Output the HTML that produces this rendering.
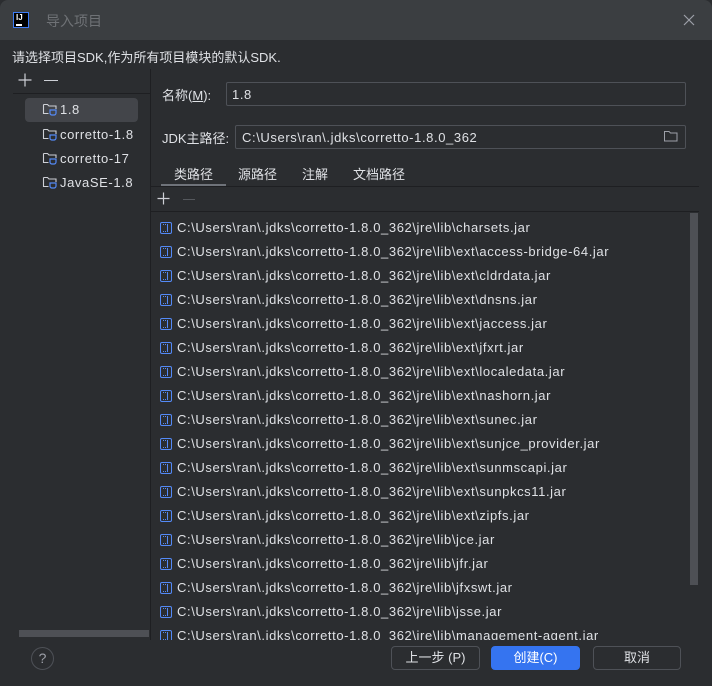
<!DOCTYPE html>
<html><head><meta charset="utf-8"><style>
*{margin:0;padding:0;box-sizing:border-box}
body{width:712px;height:686px;background:#2b2d30;font-family:"Liberation Sans","Noto Sans CJK SC",sans-serif;color:#dfe1e5;font-size:13px;position:relative;overflow:hidden}
.a{position:absolute;white-space:nowrap}
.title{left:0;top:0;width:712px;height:40px;background:#3b3e41;border-radius:8px 8px 0 0}
.inp{border:1px solid #4e5157;border-radius:2px}
.ji{display:inline-block;width:12px;height:12px;border:1.5px solid #548af7;border-radius:2px;vertical-align:-2px;margin-right:5px;position:relative}
.ji:after{content:"";position:absolute;left:2px;top:1px;width:4px;height:6px;border-right:1.5px solid #548af7;border-top:1.2px dotted #548af7;border-bottom:1.2px dotted #548af7}
.btn{height:24px;border:1px solid #4e5157;border-radius:4px;text-align:center;line-height:22px;font-size:13px}
.fi{display:inline-block;vertical-align:-3px;margin-right:2px}
.ls{letter-spacing:0.6px}
</style></head><body>
<div class="a title"></div>
<div class="a" style="left:13px;top:12px;width:16px;height:16px;background:#000;border:1px solid #3d7cf5;color:#fff;font-size:8px;font-weight:bold;line-height:9px;padding-left:2px">IJ<div style="width:6px;height:1.5px;background:#fff;margin-top:2px"></div></div>
<div class="a" style="left:46px;top:11px;font-size:14px;color:#6f7276">导入项目</div>
<svg class="a" style="left:683px;top:14px" width="12" height="12"><path d="M1 1L11 11M11 1L1 11" stroke="#9da0a8" stroke-width="1.2"/></svg>
<div class="a" style="left:12px;top:47px">请选择项目SDK,作为所有项目模块的默认SDK.</div>

<svg class="a" style="left:18px;top:73px" width="14" height="14"><path d="M7 0.5V13.5M0.5 7H13.5" stroke="#ced0d6" stroke-width="1.2"/></svg>
<div class="a" style="left:44px;top:80px;width:14px;height:1px;background:#ced0d6"></div>
<div class="a" style="left:13px;top:93px;width:137px;height:1px;background:#1e1f22"></div>
<div class="a" style="left:150px;top:69px;width:1px;height:571px;background:#1e1f22"></div>
<div class="a" style="left:25px;top:98px;width:113px;height:24px;background:#43454a;border-radius:4px"></div>
<svg width="0" height="0" style="position:absolute"><defs><g id="f"><path d="M1.5 3.5h4l1.5 1.5h7v3M1.5 3.5v9h5" fill="none" stroke="#ced0d6" stroke-width="1.1"/><path d="M8 9h6v3a2 2 0 0 1-2 2h-2a2 2 0 0 1-2-2z" fill="none" stroke="#548af7" stroke-width="1.2"/></g></defs></svg>
<div class="a ls" style="left:42px;top:101px"><svg class="fi" width="16" height="16"><use href="#f"/></svg>1.8</div>
<div class="a ls" style="left:42px;top:126px"><svg class="fi" width="16" height="16"><use href="#f"/></svg>corretto-1.8</div>
<div class="a ls" style="left:42px;top:150px"><svg class="fi" width="16" height="16"><use href="#f"/></svg>corretto-17</div>
<div class="a ls" style="left:42px;top:174px"><svg class="fi" width="16" height="16"><use href="#f"/></svg>JavaSE-1.8</div>
<div class="a" style="left:19px;top:630px;width:130px;height:7px;background:#4e5055"></div>

<div class="a" style="left:162px;top:85px">名称(<u>M</u>):</div>
<div class="a inp ls" style="left:226px;top:82px;width:460px;height:24px;padding:4px 5px">1.8</div>
<div class="a" style="left:162px;top:128px">JDK主路径:</div>
<div class="a inp ls" style="left:235px;top:125px;width:451px;height:24px;padding:4px 6px">C:\Users\ran\.jdks\corretto-1.8.0_362</div>
<svg class="a" style="left:663px;top:129px" width="16" height="14"><path d="M1.5 2.5h4.5l1.5 1.5h6.5v8h-12.5z" fill="none" stroke="#9da0a8" stroke-width="1"/></svg>

<div class="a" style="left:174px;top:164px">类路径</div>
<div class="a" style="left:238px;top:164px">源路径</div>
<div class="a" style="left:302px;top:164px">注解</div>
<div class="a" style="left:353px;top:164px">文档路径</div>
<div class="a" style="left:161px;top:184px;width:65px;height:3px;background:#6f737a"></div>
<div class="a" style="left:151px;top:186px;width:548px;height:1px;background:#1e1f22"></div>
<svg class="a" style="left:157px;top:192px" width="13" height="13"><path d="M6.5 0.5V12.5M0.5 6.5H12.5" stroke="#ced0d6" stroke-width="1.2"/></svg>
<div class="a" style="left:183px;top:199px;width:12px;height:1px;background:#55585d"></div>
<div class="a" style="left:151px;top:211px;width:548px;height:1px;background:#1e1f22"></div>
<div class="a" style="left:690px;top:213px;width:8px;height:372px;background:#4e5055"></div>

<div class="a ls" style="left:151px;top:216px;width:539px;height:424px;overflow:hidden">
<div style="padding-left:9px;line-height:24px">
<div><span class="ji"></span>C:\Users\ran\.jdks\corretto-1.8.0_362\jre\lib\charsets.jar</div>
<div><span class="ji"></span>C:\Users\ran\.jdks\corretto-1.8.0_362\jre\lib\ext\access-bridge-64.jar</div>
<div><span class="ji"></span>C:\Users\ran\.jdks\corretto-1.8.0_362\jre\lib\ext\cldrdata.jar</div>
<div><span class="ji"></span>C:\Users\ran\.jdks\corretto-1.8.0_362\jre\lib\ext\dnsns.jar</div>
<div><span class="ji"></span>C:\Users\ran\.jdks\corretto-1.8.0_362\jre\lib\ext\jaccess.jar</div>
<div><span class="ji"></span>C:\Users\ran\.jdks\corretto-1.8.0_362\jre\lib\ext\jfxrt.jar</div>
<div><span class="ji"></span>C:\Users\ran\.jdks\corretto-1.8.0_362\jre\lib\ext\localedata.jar</div>
<div><span class="ji"></span>C:\Users\ran\.jdks\corretto-1.8.0_362\jre\lib\ext\nashorn.jar</div>
<div><span class="ji"></span>C:\Users\ran\.jdks\corretto-1.8.0_362\jre\lib\ext\sunec.jar</div>
<div><span class="ji"></span>C:\Users\ran\.jdks\corretto-1.8.0_362\jre\lib\ext\sunjce_provider.jar</div>
<div><span class="ji"></span>C:\Users\ran\.jdks\corretto-1.8.0_362\jre\lib\ext\sunmscapi.jar</div>
<div><span class="ji"></span>C:\Users\ran\.jdks\corretto-1.8.0_362\jre\lib\ext\sunpkcs11.jar</div>
<div><span class="ji"></span>C:\Users\ran\.jdks\corretto-1.8.0_362\jre\lib\ext\zipfs.jar</div>
<div><span class="ji"></span>C:\Users\ran\.jdks\corretto-1.8.0_362\jre\lib\jce.jar</div>
<div><span class="ji"></span>C:\Users\ran\.jdks\corretto-1.8.0_362\jre\lib\jfr.jar</div>
<div><span class="ji"></span>C:\Users\ran\.jdks\corretto-1.8.0_362\jre\lib\jfxswt.jar</div>
<div><span class="ji"></span>C:\Users\ran\.jdks\corretto-1.8.0_362\jre\lib\jsse.jar</div>
<div><span class="ji"></span>C:\Users\ran\.jdks\corretto-1.8.0_362\jre\lib\management-agent.jar</div>
</div></div>

<div class="a" style="left:31px;top:647px;width:23px;height:23px;border:1px solid #4e5157;border-radius:50%;text-align:center;line-height:21px;color:#9da0a8;font-size:14px">?</div>
<div class="a btn" style="left:391px;top:646px;width:89px">上一步 (P)</div>
<div class="a btn" style="left:491px;top:646px;width:89px;background:#3574f0;border-color:#3574f0;color:#fff">创建(C)</div>
<div class="a btn" style="left:593px;top:646px;width:88px">取消</div>
</body></html>
